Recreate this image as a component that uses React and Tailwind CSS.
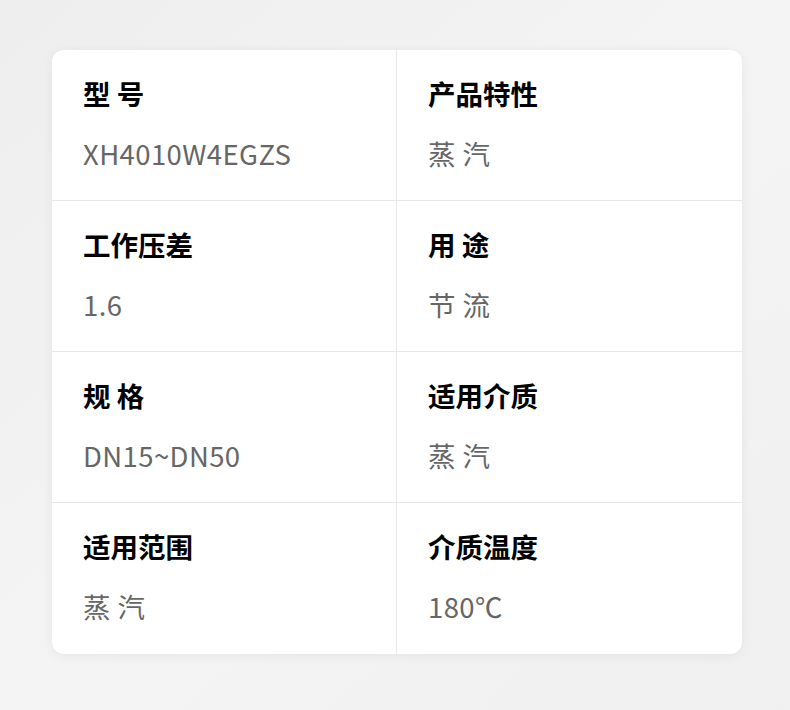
const specs = [
  { label: '型 号', value: 'XH4010W4EGZS' },
  { label: '产品特性', value: '蒸 汽' },
  { label: '工作压差', value: '1.6' },
  { label: '用 途', value: '节 流' },
  { label: '规 格', value: 'DN15~DN50' },
  { label: '适用介质', value: '蒸 汽' },
  { label: '适用范围', value: '蒸 汽' },
  { label: '介质温度', value: '180℃' },
]

export default function App() {
  return (
    <div
      className="w-[790px] h-[710px] bg-gradient-to-br from-[#eeeeee] via-[#f4f4f4] to-[#f0f0f0] pt-[50px] pl-[52px]"
      style={{ fontFamily: '"Noto Sans CJK SC", "Noto Sans", sans-serif' }}
    >
      <div className="w-[690px] bg-white rounded-[12px] shadow-[0_2px_12px_rgba(0,0,0,0.06)] grid grid-cols-2 overflow-hidden">
        {specs.map((s, i) => (
          <div
            key={i}
            className={
              'h-[151px] flex flex-col pt-[24px] pl-[31px] pr-[20px] border-[#e8e8e8] ' +
              (i % 2 === 0 ? 'border-r ' : '') +
              (i < 6 ? 'border-b' : '')
            }
          >
            <div className="text-[27.5px] leading-[38px] font-bold text-black">{s.label}</div>
            <div className="mt-[22px] text-[27.5px] leading-[38px] tracking-[0.4px] text-[#666666]">{s.value}</div>
          </div>
        ))}
      </div>
    </div>
  )
}
